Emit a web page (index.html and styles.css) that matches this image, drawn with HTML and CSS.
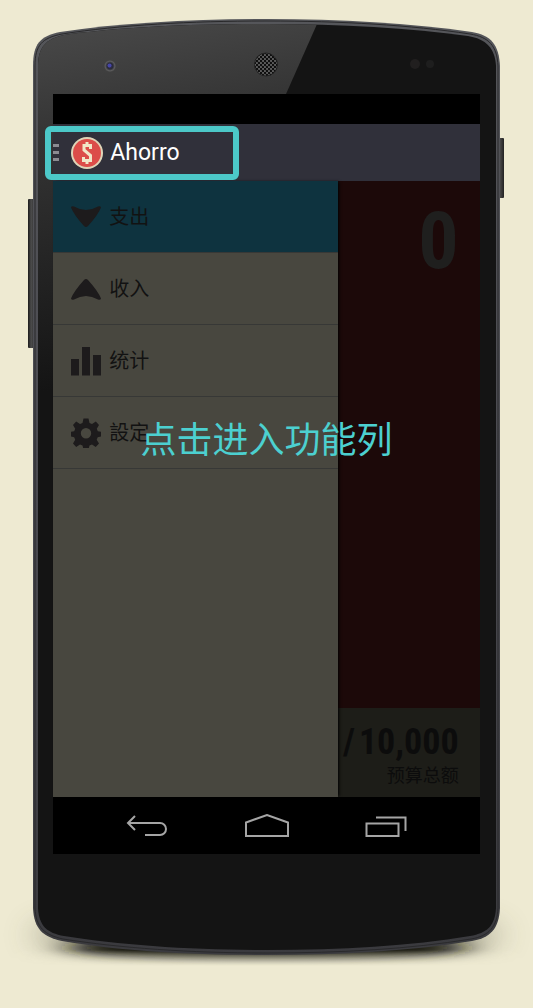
FILE: index.html
```html
<!DOCTYPE html>
<html lang="zh-CN">
<head>
<meta charset="utf-8">
<meta name="viewport" content="width=device-width, initial-scale=1">
<title>Ahorro</title>
<link rel="stylesheet" href="styles.css">
</head>
<body>
<main class="phone">
  <svg class="phone-art" viewBox="0 0 533 1008" preserveAspectRatio="none" aria-hidden="true">
    <defs>
      <linearGradient id="gloss" gradientUnits="userSpaceOnUse" x1="110" y1="20" x2="170" y2="370">
        <stop offset="0" stop-color="#484848"/>
        <stop offset=".3" stop-color="#343434"/>
        <stop offset="1" stop-color="#141414"/>
      </linearGradient>
      <linearGradient id="rim" x1="0" x2="0" y1="0" y2="1">
        <stop offset="0" stop-color="#55565a"/>
        <stop offset=".5" stop-color="#4a4a50"/>
        <stop offset="1" stop-color="#3a3a3e"/>
      </linearGradient>
      <linearGradient id="key" x1="0" x2="1" y1="0" y2="0">
        <stop offset="0" stop-color="#1c1c1c"/>
        <stop offset=".4" stop-color="#4c4c4c"/>
        <stop offset="1" stop-color="#222222"/>
      </linearGradient>
      <radialGradient id="lens">
        <stop offset="0" stop-color="#303060"/>
        <stop offset=".5" stop-color="#2a2a38"/>
        <stop offset=".8" stop-color="#5c5c5c"/>
        <stop offset="1" stop-color="#444444"/>
      </radialGradient>
      <pattern id="mesh" width="4" height="4" patternUnits="userSpaceOnUse">
        <rect width="4" height="4" fill="#5c5c5c"/>
        <circle cx="1" cy="1" r="1.2" fill="#0c0c0c"/>
        <circle cx="3" cy="3" r="1.2" fill="#0c0c0c"/>
      </pattern>
      <linearGradient id="fade" gradientUnits="userSpaceOnUse" x1="0" y1="950" x2="0" y2="966">
        <stop offset="0" stop-color="#fff"/>
        <stop offset="1" stop-color="#000"/>
      </linearGradient>
      <filter id="soft" x="-30%" y="-200%" width="160%" height="500%"><feGaussianBlur stdDeviation="16 6"/></filter>
      <filter id="wide" x="-30%" y="-100%" width="160%" height="300%"><feGaussianBlur stdDeviation="16 14"/></filter>
      <mask id="floor" maskUnits="userSpaceOnUse" x="0" y="0" width="533" height="1008"><rect width="533" height="1008" fill="url(#fade)"/></mask>
      <clipPath id="face"><path d="M38 66C38 47 46 39 64 35C120 27 190 24 266 24C342 24 410 28 468 36C486 39 495 48 496 66V908C495 926 487 933 470 936C410 946 342 950 266 950C190 950 120 945 64 936C47 933 39 926 38 908Z"/></clipPath>
    </defs>
    <g mask="url(#floor)">
      <ellipse cx="267" cy="935" rx="234" ry="24" fill="#55553f" opacity=".5" filter="url(#wide)"/>
      <ellipse cx="267" cy="948" rx="200" ry="16" fill="#16160e" filter="url(#soft)"/>
    </g>
    <rect x="28" y="199" width="8" height="149" rx="1" fill="url(#key)"/>
    <rect x="497" y="138" width="7" height="60" rx="1" fill="url(#key)"/>
    <path fill="url(#rim)" d="M33 66C33 44 40 36 60 32C120 23 190 19 266 19C342 19 410 23 472 32C491 35 499 45 500 66V908C499 929 490 938 472 941C410 951 342 955 266 955C190 955 120 951 62 941C43 937 34 929 33 908Z"/>
    <path fill="none" stroke="#29292b" d="M35 66C35 45 42 38 62 34C120 25 190 21 266 21C342 21 410 25 470 34C489 37 497 46 498 66V908C497 927 489 936 471 939C410 949 342 953 266 953C190 953 120 948 63 939C45 935 36 928 35 908Z"/>
    <g clip-path="url(#face)">
      <rect x="30" y="15" width="475" height="945" fill="#141414"/>
      <path d="M30 15H321L150 401H30Z" fill="url(#gloss)"/>
    </g>
    <circle cx="110" cy="66" r="6" fill="url(#lens)"/>
    <circle cx="109.500" cy="65.500" r="2" fill="#4646a8"/>
    <circle cx="266" cy="64.500" r="11.500" fill="url(#mesh)" stroke="#222222"/>
    <circle cx="415" cy="64" r="5" fill="#211f1f"/>
    <circle cx="430" cy="64" r="4" fill="#1e1e1e"/>
  </svg>

  <div class="screen">
    <div class="status"></div>
    <header class="bar">
      <button class="menu" type="button" aria-label="Menu"><i></i><i></i><i></i></button>
      <svg class="logo" viewBox="0 0 32 32" aria-hidden="true">
        <circle cx="16" cy="16" r="16" fill="#dfd5b8"/>
        <circle cx="16" cy="16" r="14" fill="#dc4d49"/>
        <path d="M14.500 5h3v3h-3zM14.500 24h3v3h-3z" fill="#f1e7c8"/>
        <path d="M19.500 12V8.500H13V13l6.500 5.500v5H12.500V20" fill="none" stroke="#f1e7c8" stroke-width="3"/>
      </svg>
      <h1 class="title">Ahorro</h1>
    </header>
    <div class="content">
      <nav class="drawer">
        <a class="item active" href="#expense">
          <svg class="icon" viewBox="0 0 30 30" aria-hidden="true"><path d="M0 5.500Q.5 3.500 3 4.500Q15 11.500 27 4.500Q29.500 3.500 30 5.500Q27 13 17 24Q15 26 13 24Q3 13 0 5.500Z"/></svg>
          <span>支出</span></a>
        <a class="item" href="#income">
          <svg class="icon" viewBox="0 0 30 30" aria-hidden="true"><path d="M0 24.500Q.5 26.500 3 25.500Q15 18.500 27 25.500Q29.500 26.500 30 24.500Q27 17 17 6Q15 4 13 6Q3 17 0 24.500Z"/></svg>
          <span>收入</span></a>
        <a class="item" href="#stats">
          <svg class="icon" viewBox="0 0 30 30" aria-hidden="true"><path d="M0 13h8v16.500H0zM11 1h8v28.500h-8zM22 9h8v20.500h-8z"/></svg>
          <span>统计</span></a>
        <a class="item" href="#settings">
          <svg class="icon" viewBox="0 0 30 30" aria-hidden="true">
            <path fill-rule="evenodd" d="M12.500 .5h5l1 4.500 2.500 1 3.800-2.500 3.200 3.400-2.200 3.800 1 2.500 3.200 .6v4.700l-3.300 .8-1 2.500 2.300 3.800-3.300 3.300-3.700-2.400-2.500 1-1 4h-5l-1-4-2.500-1-3.800 2.400-3.200-3.300 2.200-3.800-1-2.500-3.200-.8v-4.700l3.200-.6 1-2.500L2 6.900l3.200-3.400L9 6l2.500-1zM15 10a5.200 5.200 0 1 0 0 10.400a5.200 5.200 0 1 0 0-10.400z"/></svg>
          <span>設定</span></a>
      </nav>
      <section class="overview">
        <div class="spent">0</div>
        <div class="budget">
          <div class="total"><span>/</span><span>10,000</span></div>
          <div class="caption">预算总额</div>
        </div>
      </section>
    </div>
    <footer class="keys">
      <button type="button" aria-label="Back"><svg width="42" height="24" viewBox="0 0 42 24"><path d="M9 2L2 9l7 7M2 9h32a5.800 5.800 0 0 1 0 12H19"/></svg></button>
      <button type="button" aria-label="Home"><svg width="44" height="24" viewBox="0 0 44 24"><path d="M1 22V8.500L22 1l21 7.500V22z"/></svg></button>
      <button type="button" aria-label="Recent apps"><svg width="42" height="24" viewBox="0 0 42 24"><path d="M1.500 9.500h32V22h-32zM11 3.500h29.500V17"/></svg></button>
    </footer>
    <div class="highlight"></div>
    <p class="hint">点击进入功能列</p>
  </div>
</main>
</body>
</html>
```
FILE: styles.css
```css
* { box-sizing: border-box; }

body {
  margin: 0;
  background: #eeead2;
  font-family: Roboto, "Noto Sans CJK SC", sans-serif;
}

.phone {
  position: relative;
  min-height: 100vh;
  padding: 94px 10% 154px;
}

.phone-art {
  position: absolute;
  inset: 0;
  width: 100%;
  height: 100%;
}

.screen {
  position: relative;
  display: flex;
  flex-direction: column;
  min-height: 760px;
  background: #000;
}

.status { height: 30px; }

.bar {
  display: flex;
  align-items: center;
  height: 57px;
  background: #30303a;
}

.menu {
  display: grid;
  gap: 4px;
  width: 18px;
  padding: 0;
  border: 0;
  background: none;
}

.menu i {
  width: 6px;
  height: 3px;
  background: #8b8b91;
}

.logo { width: 32px; height: 32px; }

.title {
  margin: 0 0 0 7px;
  color: #fff;
  font-size: 23px;
  font-weight: 400;
}

.content {
  display: grid;
  grid-template-columns: 2fr 1fr;
  flex: 1;
}

.drawer {
  z-index: 1;
  background: #48473f;
  box-shadow: 2px 0 3px -1px #000;
}

.item {
  display: flex;
  align-items: center;
  gap: 8px;
  height: 72px;
  padding-left: 18px;
  border-bottom: 1px solid #373836;
  color: #121212;
  font-size: 20px;
  line-height: 28px;
  text-decoration: none;
}

.item.active { background: #0e333f; }

.icon {
  width: 30px;
  height: 30px;
  fill: #1d1b1c;
}

.overview {
  display: flex;
  flex-direction: column;
  min-width: 0;
  background: #1c0909;
  font-family: "Roboto Condensed", "DejaVu Sans Condensed", sans-serif;
}

.spent {
  flex: 1;
  padding: 16px 21px 0;
  color: #1f1f1e;
  font-size: 80px;
  font-weight: 700;
  line-height: 88px;
  text-align: right;
}

.budget {
  display: grid;
  align-content: start;
  justify-content: end;
  height: 89px;
  padding: 12px 21px 0 0;
  background: #1d1d18;
  color: #0c0c0c;
  text-align: right;
}

.total {
  display: flex;
  justify-content: flex-end;
  gap: 4px;
  font-size: 36px;
  font-weight: 700;
  line-height: 44px;
}

.caption {
  font-family: "Noto Sans CJK SC", sans-serif;
  font-size: 18px;
  line-height: 20px;
}

.keys {
  display: flex;
  justify-content: space-between;
  height: 57px;
  padding: 0 73px;
}

.keys button {
  padding: 0;
  border: 0;
  background: none;
}

.keys svg {
  display: block;
  fill: none;
  stroke: #a5a5a5;
  stroke-width: 2;
}

.highlight {
  position: absolute;
  top: 32px;
  left: -8px;
  z-index: 2;
  width: 194px;
  height: 54px;
  border: 6px solid #4cc8c8;
  border-radius: 6px;
}

.hint {
  position: absolute;
  top: 321px;
  right: 0;
  left: 0;
  z-index: 2;
  margin: 0;
  color: #4cd0d0;
  font-size: 36px;
  line-height: 52px;
  text-align: center;
}
```
